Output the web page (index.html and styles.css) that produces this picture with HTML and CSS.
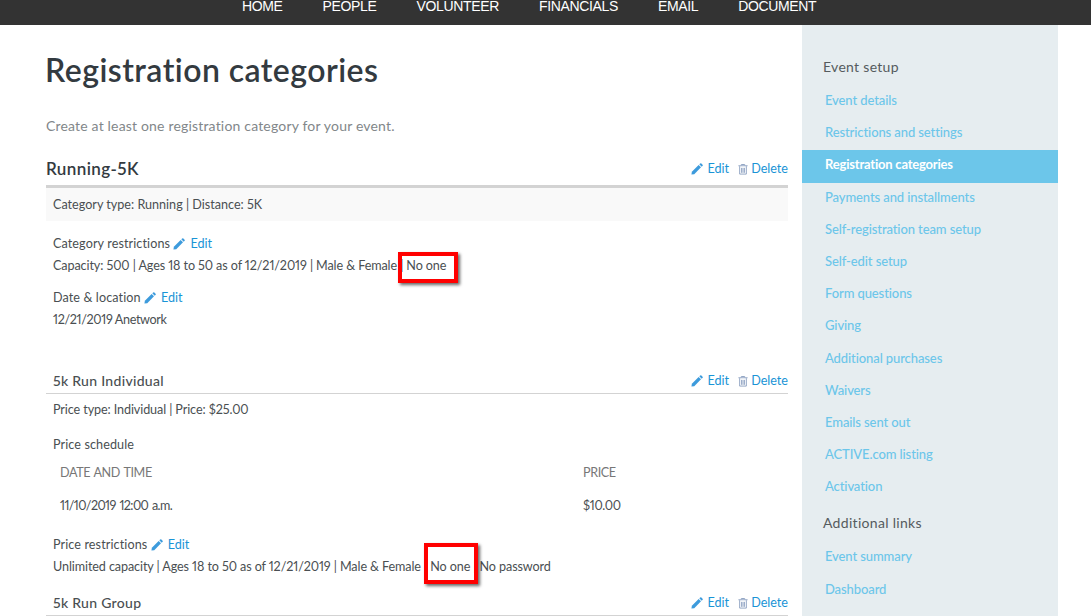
FILE: index.html
```html
<!DOCTYPE html>
<html lang="en">
<head>
<meta charset="utf-8">
<title>Registration categories</title>
<link rel="stylesheet" href="styles.css">
</head>
<body>
<svg class="defs" width="0" height="0" aria-hidden="true">
  <symbol id="pencil" viewBox="0 0 14 14">
    <path d="M1 10.2 8.9 2.3l2.8 2.8-7.9 7.9L.5 13.5z" fill="currentColor"/>
    <path d="M9.7 1.5l1-1a1 1 0 0 1 1.4 0l1.4 1.4a1 1 0 0 1 0 1.4l-1 1z" fill="currentColor"/>
  </symbol>
  <symbol id="trash" viewBox="0 0 12 14">
    <path d="M4 2V1h4v1M.5 2.5h11M2 3v9.5h8V3M4.3 5v6M6 5v6M7.7 5v6" fill="none" stroke="currentColor" stroke-width="1.1"/>
  </symbol>
</svg>
<nav class="topnav">
  <a>HOME</a><a>PEOPLE</a><a>VOLUNTEER</a><a>FINANCIALS</a><a>EMAIL</a><a>DOCUMENT</a>
</nav>
<div class="layout">
  <main class="content">
    <h1 class="title">Registration categories</h1>
    <p class="intro">Create at least one registration category for your event.</p>

    <div class="cat-head">
      <h2 class="cat-name">Running-5K</h2>
      <div class="actions">
        <a class="link"><svg class="ico"><use href="#pencil"/></svg>Edit</a>
        <a class="link"><svg class="ico trash"><use href="#trash"/></svg>Delete</a>
      </div>
    </div>
    <div class="band">Category type: Running | Distance: 5K</div>

    <div class="block first">
      <div class="label">Category restrictions <a class="link"><svg class="ico"><use href="#pencil"/></svg>Edit</a></div>
      <div class="info">Capacity: 500 | Ages 18 to 50 as of 12/21/2019 | Male &amp; Female | <span class="marked one">No one</span></div>
    </div>
    <div class="block second">
      <div class="label">Date &amp; location <a class="link"><svg class="ico"><use href="#pencil"/></svg>Edit</a></div>
      <div class="info nums">12/21/2019 Anetwork</div>
    </div>

    <div class="price-head">
      <h3 class="price-name">5k Run Individual</h3>
      <div class="actions">
        <a class="link"><svg class="ico"><use href="#pencil"/></svg>Edit</a>
        <a class="link"><svg class="ico trash"><use href="#trash"/></svg>Delete</a>
      </div>
    </div>
    <div class="info price-type">Price type: Individual | Price: $25.00</div>

    <div class="label schedule-label">Price schedule</div>
    <div class="schedule">
      <div class="th">DATE AND TIME</div><div class="th">PRICE</div>
      <div class="td tight-date">11/10/2019 12:00 a.m.</div><div class="td nums">$10.00</div>
    </div>

    <div class="block third">
      <div class="label">Price restrictions <a class="link"><svg class="ico"><use href="#pencil"/></svg>Edit</a></div>
      <div class="info">Unlimited capacity | Ages 18 to 50 as of 12/21/2019 | Male &amp; Female | <span class="marked two">No one</span> | No password</div>
    </div>

    <div class="price-head last">
      <h3 class="price-name">5k Run Group</h3>
      <div class="actions">
        <a class="link"><svg class="ico"><use href="#pencil"/></svg>Edit</a>
        <a class="link"><svg class="ico trash"><use href="#trash"/></svg>Delete</a>
      </div>
    </div>
  </main>

  <aside class="side">
    <div class="side-title">Event setup</div>
    <a class="side-link">Event details</a>
    <a class="side-link">Restrictions and settings</a>
    <a class="side-link active">Registration categories</a>
    <a class="side-link">Payments and installments</a>
    <a class="side-link">Self-registration team setup</a>
    <a class="side-link">Self-edit setup</a>
    <a class="side-link">Form questions</a>
    <a class="side-link">Giving</a>
    <a class="side-link">Additional purchases</a>
    <a class="side-link">Waivers</a>
    <a class="side-link">Emails sent out</a>
    <a class="side-link">ACTIVE.com listing</a>
    <a class="side-link">Activation</a>
    <div class="side-title second-title">Additional links</div>
    <a class="side-link">Event summary</a>
    <a class="side-link">Dashboard</a>
  </aside>
</div>
</body>
</html>
```
FILE: styles.css
```css
*, *::after { box-sizing: border-box; }
html, body { margin: 0; height: 616px; overflow: hidden; background: #fff; }
body {
  font-family: "Lato", "Liberation Sans", sans-serif; font-size: 12.6px; color: #4a4f52;
  font-variant-numeric: proportional-nums;
}
.defs { position: absolute; }

.topnav {
  height: 25px; background: #333; display: flex; gap: 40px;
  padding-left: 242px; overflow: hidden;
}
.topnav a {
  font-family: "Liberation Sans", sans-serif; font-size: 14px; line-height: 13px;
  color: #fff; white-space: nowrap; letter-spacing: -0.35px;
}

.layout { display: flex; align-items: flex-start; }
.content { width: 802px; padding: 0 14px 0 46px; flex: none; }

.title {
  margin: 25px 0 0 -1px; font-size: 32px; line-height: 40px; font-weight: 600; color: #333a40;
  letter-spacing: 0.45px;
}
.intro { margin: 27px 0 0; font-size: 14px; line-height: 18px; color: #82878a; letter-spacing: 0.18px; }

.cat-head { margin-top: 17px; height: 33px; display: flex; justify-content: space-between; align-items: center; }
.cat-name { margin: 0; font-size: 17px; font-weight: 600; color: #333a40; letter-spacing: 0.4px; }
.actions { display: flex; gap: 9px; }
.link { color: #1a94d6; white-space: nowrap; letter-spacing: 0; }
.ico { width: 12px; height: 12px; margin-right: 5px; vertical-align: -2px; color: #3d9bdc; }
.ico.trash { width: 10px; height: 13px; margin-right: 3px; vertical-align: -3px; color: #8a9fc0; }

.band { line-height: 33px; background: #f9f9f9; border-top: 3px solid #d3d3d3; height: 36px; padding-left: 7px; }

.block { padding-left: 7px; }
.first { margin-top: 13px; }
.second { margin-top: 12px; }
.label { line-height: 20px; color: #4a4f52; letter-spacing: 0.1px; }
.info { line-height: 20px; margin-top: 2px; white-space: nowrap; letter-spacing: -0.1px; }
.nums { letter-spacing: -0.35px; }
.tight-date { letter-spacing: -0.6px; word-spacing: 1px; }
.marked { position: relative; }
.marked::after {
  content: ""; position: absolute; border: 4px solid #f00; box-shadow: 2px 2px 3px rgba(0,0,0,.6);
}
.one::after { left: -8px; top: -6px; width: 60px; height: 31px; }
.two::after { left: -6px; top: -16px; width: 54px; height: 41px; }

.price-head {
  margin-top: 37px; height: 27px; display: flex; justify-content: space-between; align-items: center;
  border-bottom: 1px solid #d3d3d3; padding-left: 7px;
}
.price-name { margin: 0; font-size: 14px; font-weight: 500; color: #4a4f52; letter-spacing: 0.3px; }
.price-type { padding-left: 7px; margin-top: 6px; }
.schedule-label { padding-left: 7px; margin-top: 15px; }
.schedule { display: grid; grid-template-columns: 523px 1fr; padding-left: 14px; }
.th { padding: 8px 0 0; line-height: 20px; color: #777; height: 33px; letter-spacing: -0.4px; word-spacing: 1px; }
.td { line-height: 20px; padding-top: 8px; height: 33px; color: #4a4f52; }
.third { margin-top: 14px; }
.last { margin-top: 13px; height: 26px; }

.side { width: 256px; height: 591px; background: #e6edf0; flex: none; padding-top: 32px; }
.side-title { padding-left: 21px; font-size: 14px; line-height: 20px; color: #555b5e; letter-spacing: 0.3px; height: 29px; }
.second-title { margin-top: 9px; }
.side-link { display: block; height: 32.2px; line-height: 28.2px; padding-left: 23px; color: #6cc6ea; font-size: 13px; font-weight: 500; letter-spacing: -0.1px; }
.side-link.active { background: #6cc6ea; color: #fff; font-weight: 700; letter-spacing: -0.2px; }
```
